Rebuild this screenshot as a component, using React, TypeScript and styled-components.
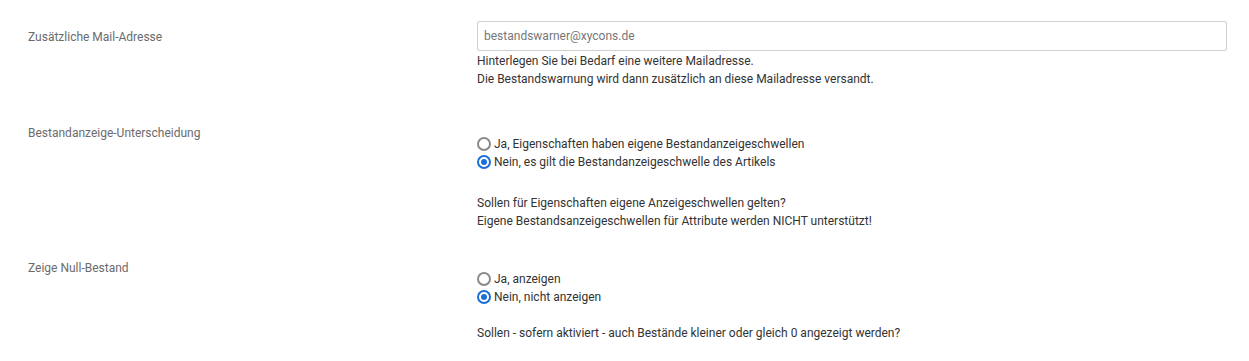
import React from 'react';
import styled, { createGlobalStyle } from 'styled-components';

const GlobalStyle = createGlobalStyle`
  html, body {
    margin: 0;
    padding: 0;
    background: #fff;
  }
  body {
    font-family: Roboto, "Liberation Sans", Arial, sans-serif;
    font-size: 12px;
    color: #333;
  }
`;

const Page = styled.div`
  padding: 21px 22px 0 28px;
`;

const Row = styled.div<{ gap: number }>`
  display: grid;
  grid-template-columns: 449px 1fr;
  margin-bottom: ${({ gap }) => gap}px;
`;

const Label = styled.div`
  color: #6b6b6b;
  line-height: 18px;
  padding-top: 7px;
`;

const Value = styled.div<{ offset: number }>`
  padding-top: ${({ offset }) => offset}px;
  line-height: 18px;
`;

const TextInput = styled.input`
  box-sizing: border-box;
  display: block;
  width: 100%;
  height: 30px;
  border: 1px solid #cfcfcf;
  border-radius: 2px;
  padding: 0 6px;
  font-family: inherit;
  font-size: 12px;
  color: #333;
  outline: none;
  &::placeholder {
    color: #777;
  }
`;

const Help = styled.div<{ top?: number }>`
  margin-top: ${({ top = 0 }) => top}px;
  color: #333;
`;

const RadioLine = styled.label`
  display: flex;
  align-items: center;
  gap: 3px;
  height: 18px;
  color: #333;
`;

const RadioDot = styled.span<{ checked: boolean }>`
  box-sizing: border-box;
  width: 14px;
  height: 14px;
  border-radius: 50%;
  border: 2px solid ${({ checked }) => (checked ? '#1a6fd8' : '#8a8a8a')};
  display: flex;
  align-items: center;
  justify-content: center;
  &::after {
    content: '';
    width: 6px;
    height: 6px;
    border-radius: 50%;
    background: ${({ checked }) => (checked ? '#1a6fd8' : 'transparent')};
  }
`;

interface Option {
  text: string;
  checked: boolean;
}

const RadioGroup: React.FC<{ options: Option[] }> = ({ options }) => (
  <div>
    {options.map(o => (
      <RadioLine key={o.text}>
        <RadioDot checked={o.checked} />
        {o.text}
      </RadioLine>
    ))}
  </div>
);

const App: React.FC = () => (
  <>
    <GlobalStyle />
    <Page>
      <Row gap={29}>
        <Label>Zusätzliche Mail-Adresse</Label>
        <Value offset={0}>
          <TextInput placeholder="bestandswarner@xycons.de" />
          <Help top={1}>
            Hinterlegen Sie bei Bedarf eine weitere Mailadresse.
            <br />
            Die Bestandswarnung wird dann zusätzlich an diese Mailadresse versandt.
          </Help>
        </Value>
      </Row>
      <Row gap={22}>
        <Label>Bestandanzeige-Unterscheidung</Label>
        <Value offset={18}>
          <RadioGroup
            options={[
              { text: 'Ja, Eigenschaften haben eigene Bestandanzeigeschwellen', checked: false },
              { text: 'Nein, es gilt die Bestandanzeigeschwelle des Artikels', checked: true },
            ]}
          />
          <Help top={23}>
            Sollen für Eigenschaften eigene Anzeigeschwellen gelten?
            <br />
            Eigene Bestandsanzeigeschwellen für Attribute werden NICHT unterstützt!
          </Help>
        </Value>
      </Row>
      <Row gap={0}>
        <Label>Zeige Null-Bestand</Label>
        <Value offset={18}>
          <RadioGroup
            options={[
              { text: 'Ja, anzeigen', checked: false },
              { text: 'Nein, nicht anzeigen', checked: true },
            ]}
          />
          <Help top={18}>Sollen - sofern aktiviert - auch Bestände kleiner oder gleich 0 angezeigt werden?</Help>
        </Value>
      </Row>
    </Page>
  </>
);

export default App;
